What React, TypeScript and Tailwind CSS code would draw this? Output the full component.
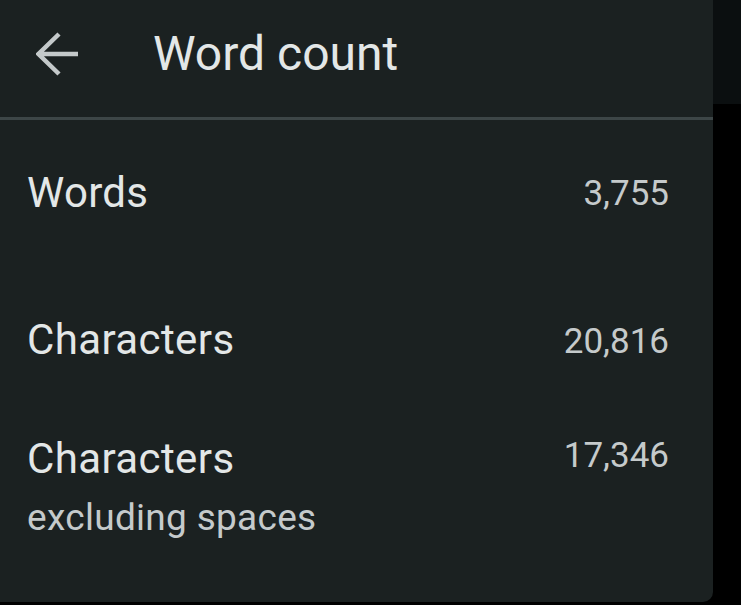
const rows = [
  { label: "Words", value: "3,755" },
  { label: "Characters", value: "20,816" },
  { label: "Characters", value: "17,346", sub: "excluding spaces" },
];

function BackArrow() {
  return (
    <svg width="44" height="44" viewBox="0 0 44 44" fill="none" className="block">
      <path
        d="M23 2 L2.5 22 L23 42 M2.5 22 H42"
        stroke="#c4c9ca"
        strokeWidth="4.5"
        strokeLinejoin="miter"
      />
    </svg>
  );
}

export default function App() {
  return (
    <div
      className="flex h-[605px] w-[741px] items-start overflow-hidden bg-black"
      style={{ fontFamily: "Roboto, 'Noto Sans', sans-serif" }}
    >
      <div className="flex h-[602px] w-[713px] flex-col rounded-br-[10px] bg-[#1b2121]">
        <div className="flex h-[117px] items-start">
          <div className="ml-[36px] mt-[32px]">
            <BackArrow />
          </div>
          <h1 className="ml-[73px] pt-[30px] text-[48px] font-normal leading-none text-[#e3e7e7]">
            Word count
          </h1>
        </div>
        <div className="h-[3px] bg-[#3d4647]" />

        <div className="flex items-start justify-between pl-[27px] pr-[44px] pt-[52px]">
          <span className="text-[42px] leading-none tracking-[0.3px] text-[#e3e7e7]">{rows[0].label}</span>
          <span className="mt-[4px] text-[35px] leading-none text-[#c5cacb]">{rows[0].value}</span>
        </div>

        <div className="flex items-start justify-between pl-[27px] pr-[44px] pt-[105px]">
          <span className="text-[42px] leading-none tracking-[0.4px] text-[#e3e7e7]">{rows[1].label}</span>
          <span className="mt-[5px] text-[35px] leading-none text-[#c5cacb]">{rows[1].value}</span>
        </div>

        <div className="flex items-start justify-between pl-[27px] pr-[44px] pt-[77px]">
          <div className="flex flex-col">
            <span className="text-[42px] leading-none tracking-[0.4px] text-[#e3e7e7]">{rows[2].label}</span>
            <span className="mt-[19px] text-[37px] leading-none tracking-[0.3px] text-[#c5cacb]">{rows[2].sub}</span>
          </div>
          <span className="text-[35px] leading-none text-[#c5cacb]">{rows[2].value}</span>
        </div>
      </div>
      <div className="flex-1">
        <div className="h-[104px] bg-[#0b0f10]" />
      </div>
    </div>
  );
}
